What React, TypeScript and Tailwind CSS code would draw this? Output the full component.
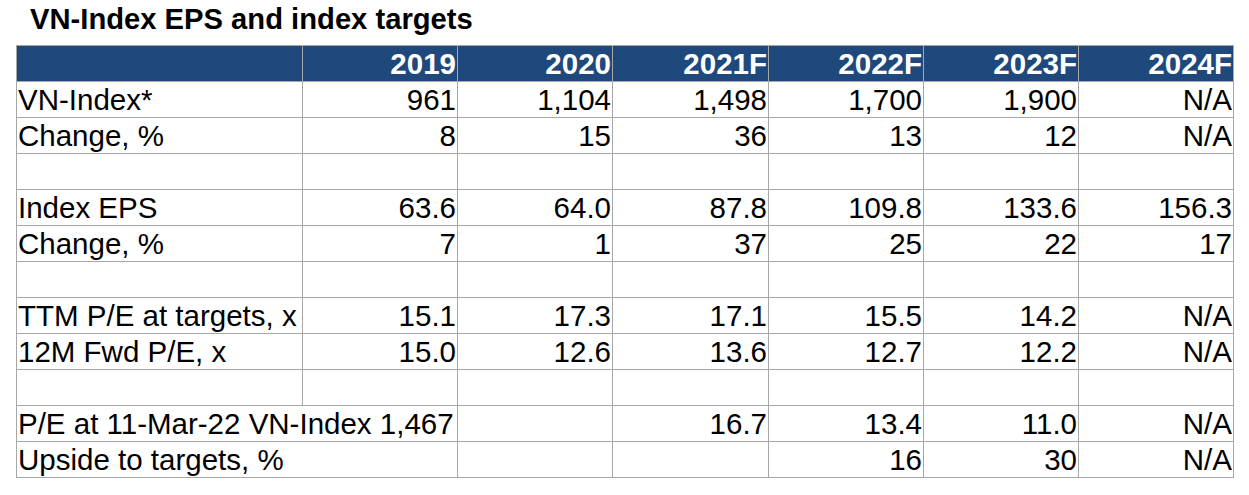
const years = ['2019', '2020', '2021F', '2022F', '2023F', '2024F'];

type Row = { label: string; values: string[]; overflow?: boolean };

const rows: Row[] = [
  { label: 'VN-Index*', values: ['961', '1,104', '1,498', '1,700', '1,900', 'N/A'] },
  { label: 'Change, %', values: ['8', '15', '36', '13', '12', 'N/A'] },
  { label: '', values: ['', '', '', '', '', ''] },
  { label: 'Index EPS', values: ['63.6', '64.0', '87.8', '109.8', '133.6', '156.3'] },
  { label: 'Change, %', values: ['7', '1', '37', '25', '22', '17'] },
  { label: '', values: ['', '', '', '', '', ''] },
  { label: 'TTM P/E at targets, x', values: ['15.1', '17.3', '17.1', '15.5', '14.2', 'N/A'] },
  { label: '12M Fwd P/E, x', values: ['15.0', '12.6', '13.6', '12.7', '12.2', 'N/A'] },
  { label: '', values: ['', '', '', '', '', ''] },
  { label: 'P/E at 11-Mar-22 VN-Index 1,467', values: ['', '', '16.7', '13.4', '11.0', 'N/A'], overflow: true },
  { label: 'Upside to targets, %', values: ['', '', '', '16', '30', 'N/A'], overflow: true },
];

const gridCols = 'grid grid-cols-[286px_155px_155px_156px_155px_155px_155px]';

export default function App() {
  return (
    <div className="w-[1249px] h-[495px] bg-white text-black font-['Liberation_Sans',Arial,sans-serif] text-[29.5px]">
      {/* Title */}
      <div className="h-[45px] pt-[1px] pl-[30px] leading-[36px] font-bold text-[29.2px] whitespace-nowrap">
        VN-Index EPS and index targets
      </div>

      {/* Table */}
      <div className="ml-[16px] w-[1218px] border-l border-t border-[#a6a6a6]">
        <div className={`${gridCols} h-[36px] bg-[#1f497d] text-white font-bold`}>
          <div className="border-r border-b border-[#a6a6a6]" />
          {years.map((y) => (
            <div
              key={y}
              className="border-r border-b border-[#a6a6a6] text-right pr-[1px] leading-[35px]"
            >
              {y}
            </div>
          ))}
        </div>

        {rows.map((row, i) => (
          <div key={i} className={`${gridCols} h-[36px]`}>
            <div
              className={`${row.overflow ? '' : 'border-r'} border-b border-[#a6a6a6] pl-[1px] leading-[35px] whitespace-nowrap overflow-visible relative z-10`}
            >
              {row.label}
            </div>
            {row.values.map((v, j) => (
              <div
                key={j}
                className="border-r border-b border-[#a6a6a6] text-right pr-[1px] leading-[35px] whitespace-nowrap"
              >
                {v}
              </div>
            ))}
          </div>
        ))}
      </div>
    </div>
  );
}
